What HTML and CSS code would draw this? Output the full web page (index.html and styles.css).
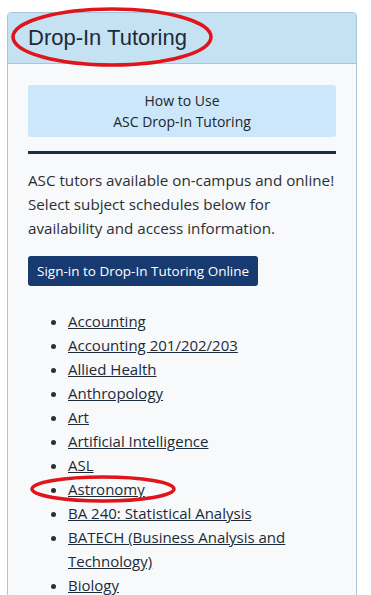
FILE: index.html
```html
<!DOCTYPE html>
<html>
<head>
<meta charset="utf-8">
<link rel="stylesheet" href="styles.css">
</head>
<body>
<div class="card">
  <div class="card-header"><h2 class="title">Drop-In Tutoring</h2></div>
  <div class="card-body">
    <a class="howto" href="#">How to Use<br>ASC Drop-In Tutoring</a>
    <hr class="rule">
    <p class="intro">ASC tutors available on-campus and online! Select subject schedules below for availability and access information.</p>
    <a class="btn" href="#">Sign-in to Drop-In Tutoring Online</a>
    <ul class="subjects">
      <li><a href="#">Accounting</a></li>
      <li><a href="#">Accounting 201/202/203</a></li>
      <li><a href="#">Allied Health</a></li>
      <li><a href="#">Anthropology</a></li>
      <li><a href="#">Art</a></li>
      <li><a href="#">Artificial Intelligence</a></li>
      <li><a href="#">ASL</a></li>
      <li><a href="#">Astronomy</a></li>
      <li><a href="#">BA 240: Statistical Analysis</a></li>
      <li><a href="#">BATECH (Business Analysis and Technology)</a></li>
      <li><a href="#">Biology</a></li>
    </ul>
  </div>
</div>
<svg class="mark mark-title" width="204" height="62" viewBox="0 0 204 62"><ellipse cx="102" cy="31" rx="99" ry="28" fill="none" stroke="#e0151b" stroke-width="3.5"/></svg>
<svg class="mark mark-astro" width="148" height="30" viewBox="0 0 148 30"><ellipse cx="74" cy="15" rx="71" ry="12" fill="none" stroke="#e0151b" stroke-width="3.5"/></svg>
</body>
</html>
```
FILE: styles.css
```css
html, body { margin: 0; padding: 0; background: #fff; }
body { position: relative; width: 371px; height: 595px; overflow: hidden; font-family: "Open Sans", "Noto Sans", sans-serif; color: #212529; }
.card { margin: 12px 0 0 7px; width: 348px; border: 1px solid #a8c5da; border-radius: 4px; background: #f7f9fb; }
.card-header { background: #c5e2f3; border-bottom: 1px solid #a8c5da; height: 50px; display: flex; align-items: center; padding-left: 20px; border-radius: 3px 3px 0 0; }
.title { margin: 0; font-family: "Liberation Sans", Arial, sans-serif; font-weight: normal; font-size: 22px; color: #1e2a36; }
.card-body { padding: 21px 20px 0 20px; }
.howto { display: block; background: #cce7f9; border-radius: 3px; text-align: center; color: #212529; text-decoration: none; font-size: 14px; line-height: 21px; padding: 5px 0 5px; }
.rule { border: 0; height: 3px; background: #1c2a4c; margin: 14px 0 14px; }
.intro { margin: 0 0 16px; font-size: 15.2px; line-height: 24px; color: #2a2f33; }
.btn { display: inline-block; background: #173a70; color: #fff; text-decoration: none; font-size: 13.5px; line-height: 30px; padding: 0 9px; border-radius: 3px; }
.subjects { margin: 23px 0 0; padding-left: 40px; font-size: 15px; line-height: 24px; }
.subjects li { color: #2a2f33; }
.subjects a { color: #1d2a38; text-decoration: underline; }
.mark { position: absolute; }
.mark-title { left: 10px; top: 6px; }
.mark-astro { left: 29px; top: 474px; }
```
